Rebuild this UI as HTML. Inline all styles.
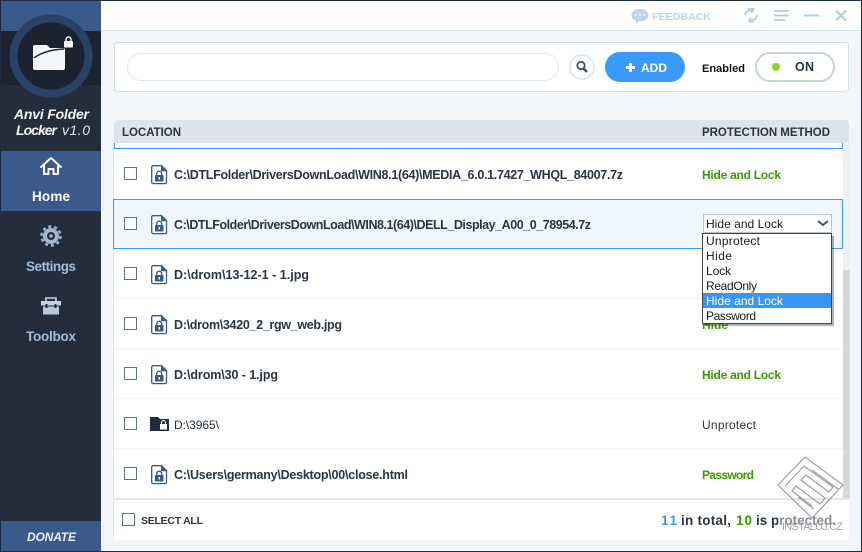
<!DOCTYPE html>
<html><head><meta charset="utf-8"><style>
html,body{margin:0;padding:0;background:#fff}
svg{display:block}
text{font-family:"Liberation Sans",sans-serif}
.p{font-size:12.500px;font-weight:bold;fill:#2a3442}
.g{font-size:12px;font-weight:bold;fill:#3a9a00}
.s{font-size:12px;fill:#2a3442}
.m{font-size:12px;fill:#1a1a1a}
.n{font-size:13.500px;font-weight:bold;fill:#a3bcdc;text-anchor:start}
</style></head><body>
<svg width="862" height="552" viewBox="0 0 862 552" xmlns="http://www.w3.org/2000/svg">
<defs>
<g id="f"><path d="M.7 2a1.300 1.300 0 0 1 1.300-1.300h8.500l5 5v11.600a1.300 1.300 0 0 1-1.300 1.300h-12.200a1.300 1.300 0 0 1-1.300-1.300z" fill="#fff" stroke="#3a5a8c" stroke-width="1.300"/><path d="M10.500.7v5h5z" fill="#3a5a8c" stroke="#3a5a8c"/><rect x="4" y="10" width="8.500" height="6.500" rx=".8" fill="#3a5a8c"/><path d="M5.800 10V8.600a2.400 2.400 0 0 1 4.800 0V10" fill="none" stroke="#3a5a8c" stroke-width="1.400"/><rect x="7.500" y="12" width="1.500" height="2.500" fill="#fff"/></g>
<g id="c"><rect x=".5" y=".5" width="12" height="12" fill="#fff" stroke="#5d7295"/></g>
</defs>

<!-- window -->
<rect width="862" height="552" fill="#1f2c40"/>
<rect x="101" y="1" width="760" height="550" fill="#f2f6fb"/>
<rect x="101" y="1" width="760" height="29" fill="#fff"/>
<rect x="101" y="30" width="760" height="1" fill="#cfdcea"/>

<!-- sidebar -->
<rect x="1" y="1" width="100" height="30" fill="#3b5a8c"/>
<rect x="1" y="31" width="100" height="54" fill="#1c2432"/>
<rect x="1" y="85" width="100" height="466" fill="#232d3c"/>
<circle cx="51" cy="56" r="37.500" fill="#1c2330" stroke="#2a4268" stroke-width="8"/>
<path d="M33 47a2 2 0 0 1 2-2h12l3 3h13a2 2 0 0 1 2 2v18a2 2 0 0 1-2 2H35a2 2 0 0 1-2-2z" fill="#f4f6f8"/>
<path d="M34 58C42 52 52 49.500 64 49" fill="none" stroke="#1c2330" stroke-width="1.400"/>
<rect x="64" y="41" width="9" height="6.500" rx="1" fill="#f4f6f8"/>
<path d="M66 41v-1.500a2.500 2.500 0 0 1 5 0V41" fill="none" stroke="#f4f6f8" stroke-width="1.400"/>
<text x="14" y="119" font-size="14" font-weight="bold" font-style="italic" fill="#f2f4f7" textLength="75" lengthAdjust="spacing">Anvi Folder</text>
<text x="16" y="135" font-size="14" font-weight="bold" font-style="italic" fill="#f2f4f7" textLength="41" lengthAdjust="spacing">Locker</text>
<text x="62" y="135" font-size="14" font-style="italic" fill="#e6e9ee" textLength="28" lengthAdjust="spacing">v1.0</text>

<rect x="1" y="151" width="100" height="60" fill="#3a5a8b"/>
<path d="M41 167l10-9 10 9M44 165v9h4.500v-5h5v5H58v-9" fill="none" stroke="#fff" stroke-width="2" stroke-linejoin="round" stroke-linecap="round"/>
<text x="32" y="201" font-size="13.500" font-weight="bold" fill="#fff" textLength="38" lengthAdjust="spacing">Home</text>

<circle cx="51" cy="236" r="6" fill="none" stroke="#a3b8d4" stroke-width="4"/>
<circle cx="51" cy="236" r="9.500" fill="none" stroke="#a3b8d4" stroke-width="2.500" stroke-dasharray="3 2.970"/>
<circle cx="51" cy="236" r="1.800" fill="#a3b8d4"/>
<text x="26" y="271" class="n" textLength="50" lengthAdjust="spacing">Settings</text>

<path d="M46 301v-3h10v3" fill="none" stroke="#c2d2e6" stroke-width="1.600"/>
<rect x="41" y="301" width="20" height="4.500" fill="#c2d2e6"/>
<rect x="43" y="306.500" width="16" height="8" fill="#b5c8e0"/>
<rect x="45.500" y="304" width="2" height="4" fill="#232d3c"/><rect x="54.500" y="304" width="2" height="4" fill="#232d3c"/>
<text x="26" y="341" class="n" textLength="50" lengthAdjust="spacing">Toolbox</text>

<rect x="1" y="521" width="100" height="30" fill="#3a5a8b"/>
<text x="27" y="541" font-size="12" font-weight="bold" font-style="italic" fill="#e8edf4" textLength="49" lengthAdjust="spacing">DONATE</text>

<!-- title bar -->
<path d="M640 9c4.700 0 8.500 2.700 8.500 6.200s-3.800 6.200-8.500 6.200l-1.500-.1-2.500 2.700v-3.500c-2.700-1-4.500-3-4.500-5.300 0-3.500 3.800-6.200 8.500-6.200z" fill="#c3d3e7"/>
<circle cx="636" cy="15" r="1" fill="#fff"/><circle cx="640" cy="15" r="1" fill="#fff"/><circle cx="644" cy="15" r="1" fill="#fff"/>
<text x="652" y="20" font-size="10.500" font-weight="bold" fill="#c3d3e7" textLength="59" lengthAdjust="spacing">FEEDBACK</text>
<path d="M745 15c.5-3 3-5 6-4.500l-1.500-1.500h4l-2 4M757 15c-.5 3-3 6-6 5l1.500 1.500-3.500 0 1.500-4" fill="none" stroke="#bccee4" stroke-width="2"/>
<path d="M774 11h15M774 15.500h15M774 20h11" stroke="#b6c9e1" stroke-width="1.800"/>
<rect x="804" y="14.500" width="15" height="2" fill="#b6c9e1"/>
<path d="M836 10.500l10 10M846 10.500l-10 10" stroke="#b6c9e1" stroke-width="2"/>

<!-- search panel -->
<rect x="114.500" y="42.500" width="734" height="49" rx="3" fill="#fff" stroke="#d3deea"/>
<rect x="127.500" y="53.500" width="431" height="27" rx="13.500" fill="#fff" stroke="#dee6ef"/>
<circle cx="582" cy="67" r="12" fill="#fff" stroke="#dbe3ed" stroke-width="1.500"/>
<circle cx="581" cy="65.500" r="3.700" fill="none" stroke="#3a5070" stroke-width="1.800"/>
<path d="M583.500 68.500l3.500 3.500" stroke="#3a5070" stroke-width="2.500"/>
<rect x="605" y="52" width="80" height="30" rx="15" fill="#3a9afa"/>
<path d="M626 67.500h9M630.500 63v9" stroke="#fff" stroke-width="3"/>
<text x="641" y="72" font-size="12" font-weight="bold" fill="#fff" textLength="26" lengthAdjust="spacing">ADD</text>
<text x="702" y="72" font-size="11" font-weight="bold" fill="#111" textLength="43" lengthAdjust="spacing">Enabled</text>
<rect x="756" y="53" width="78" height="28" rx="14" fill="#fff" stroke="#c6d4e3" stroke-width="2"/>
<circle cx="776" cy="67" r="4" fill="#8cd42e"/>
<text x="795" y="71" font-size="12.500" font-weight="bold" fill="#2a3442" textLength="19" lengthAdjust="spacing">ON</text>

<!-- table -->
<path d="M114 143v-19a4 4 0 0 1 4-4h727a4 4 0 0 1 4 4v19z" fill="#dbe4ed"/>
<text x="122" y="136" font-size="11.500" font-weight="bold" fill="#2a3442" textLength="59" lengthAdjust="spacing">LOCATION</text>
<text x="702" y="136" font-size="11.500" font-weight="bold" fill="#2a3442" textLength="128" lengthAdjust="spacing">PROTECTION METHOD</text>

<rect x="114" y="143" width="729" height="356" fill="#fff"/>
<rect x="113" y="143" width="1" height="393" fill="#dfe7f0"/>
<rect x="843" y="143" width="7" height="356" fill="#eef1f5"/>
<rect x="843" y="270" width="7" height="229" fill="#d4d8dd"/>
<rect x="114" y="148" width="729" height="1" fill="#3a9afa"/>
<rect x="114" y="143" width="1" height="6" fill="#3a9afa"/><rect x="842" y="143" width="1" height="6" fill="#3a9afa"/>

<rect x="113.500" y="199.500" width="729" height="49" fill="#eff6fe" stroke="#3a9afa"/>
<g fill="#edf1f6">
<rect x="114" y="298" width="729" height="1"/><rect x="114" y="348" width="729" height="1"/><rect x="114" y="398" width="729" height="1"/><rect x="114" y="448" width="729" height="1"/>
</g>

<!-- rows -->
<use href="#c" x="124" y="167"/><use href="#f" x="151" y="165"/>
<text x="174" y="179" class="p" textLength="449" lengthAdjust="spacing">C:\DTLFolder\DriversDownLoad\WIN8.1(64)\MEDIA_6.0.1.7427_WHQL_84007.7z</text>
<text x="702" y="179" class="g" textLength="79" lengthAdjust="spacing">Hide and Lock</text>

<use href="#c" x="124" y="217"/><use href="#f" x="151" y="215"/>
<text x="174" y="229" class="p" textLength="417" lengthAdjust="spacing">C:\DTLFolder\DriversDownLoad\WIN8.1(64)\DELL_Display_A00_0_78954.7z</text>

<use href="#c" x="124" y="267"/><use href="#f" x="151" y="265"/>
<text x="174" y="279" class="p" textLength="135" lengthAdjust="spacing">D:\drom\13-12-1 - 1.jpg</text>

<use href="#c" x="124" y="317"/><use href="#f" x="151" y="315"/>
<text x="174" y="329" class="p" textLength="168" lengthAdjust="spacing">D:\drom\3420_2_rgw_web.jpg</text>
<text x="702" y="329" class="g" textLength="26" lengthAdjust="spacing">Hide</text>

<use href="#c" x="124" y="367"/><use href="#f" x="151" y="365"/>
<text x="174" y="379" class="p" textLength="104" lengthAdjust="spacing">D:\drom\30 - 1.jpg</text>
<text x="702" y="379" class="g" textLength="79" lengthAdjust="spacing">Hide and Lock</text>

<use href="#c" x="124" y="417"/>
<path d="M150 417h8l2 2h9v12h-19z" fill="#1f2c40"/>
<rect x="160" y="424" width="7" height="5.500" fill="#fff"/><path d="M161.500 424v-1.500a2 2 0 0 1 4 0V424" fill="none" stroke="#fff" stroke-width="1.100"/>
<text x="174" y="429" class="s" textLength="45" lengthAdjust="spacing">D:\3965\</text>
<text x="702" y="429" class="s" textLength="54" lengthAdjust="spacing">Unprotect</text>

<use href="#c" x="124" y="467"/><use href="#f" x="151" y="465"/>
<text x="174" y="479" class="p" textLength="234" lengthAdjust="spacing">C:\Users\germany\Desktop\00\close.html</text>
<text x="702" y="479" class="g" textLength="52" lengthAdjust="spacing">Password</text>

<!-- footer -->
<path d="M114 499h735v37a4 4 0 0 1-4 4H118a4 4 0 0 1-4-4z" fill="#fff"/>
<rect x="114" y="498" width="735" height="2" fill="#dfe7f0"/>
<use href="#c" x="122" y="513"/>
<text x="141" y="524" font-size="10.500" font-weight="bold" fill="#2a3442" textLength="62" lengthAdjust="spacing">SELECT ALL</text>
<text x="661" y="525" font-size="13.500" font-weight="bold" fill="#3a9afa" textLength="16" lengthAdjust="spacing">11</text>
<text x="681" y="525" font-size="13.500" font-weight="bold" fill="#2a3442" textLength="50" lengthAdjust="spacing">in total,</text>
<text x="736" y="525" font-size="13.500" font-weight="bold" fill="#3a9a00" textLength="16" lengthAdjust="spacing">10</text>
<text x="756" y="525" font-size="13.500" font-weight="bold" fill="#2a3442" textLength="80" lengthAdjust="spacing">is protected.</text>

<!-- dropdown -->
<rect x="703.500" y="214.500" width="128" height="18" fill="#fff" stroke="#b9c3cf"/>
<text x="706" y="228" class="m" textLength="77" lengthAdjust="spacing">Hide and Lock</text>
<path d="M818 221l5 4 5-4" fill="none" stroke="#3a5070" stroke-width="2"/>
<rect x="705" y="236" width="129" height="90" fill="#000" opacity=".3"/>
<rect x="702.500" y="233.500" width="129" height="90" fill="#fff" stroke="#444"/>
<rect x="703" y="293" width="128" height="15" fill="#3a96f5"/>
<text x="706" y="245" class="m" textLength="54" lengthAdjust="spacing">Unprotect</text>
<text x="706" y="260" class="m" textLength="26" lengthAdjust="spacing">Hide</text>
<text x="706" y="275" class="m" textLength="25" lengthAdjust="spacing">Lock</text>
<text x="706" y="290" class="m" textLength="51" lengthAdjust="spacing">ReadOnly</text>
<text x="706" y="305" font-size="12" fill="#fff" textLength="77" lengthAdjust="spacing">Hide and Lock</text>
<text x="706" y="320" class="m" textLength="50" lengthAdjust="spacing">Password</text>

<!-- watermark -->
<rect x="778" y="512" width="71" height="28" fill="#fff" opacity=".45"/>
<g fill="none" stroke="#a0a0a0" stroke-width="1.200">
<path d="M778 485l27-28 38 28-31 33z"/>
<path d="M785 486l19-20 29 21-4 5-23-17-5 5 24 18-5 6-24-18-4 5 20 15"/>
<path d="M812 470l26 19M798 497l16 12"/>
</g>
<text x="782" y="530" font-size="11" fill="#8b8f96" opacity=".8" textLength="61" lengthAdjust="spacing">INSTALUJ.CZ</text>
</svg>
</body></html>
